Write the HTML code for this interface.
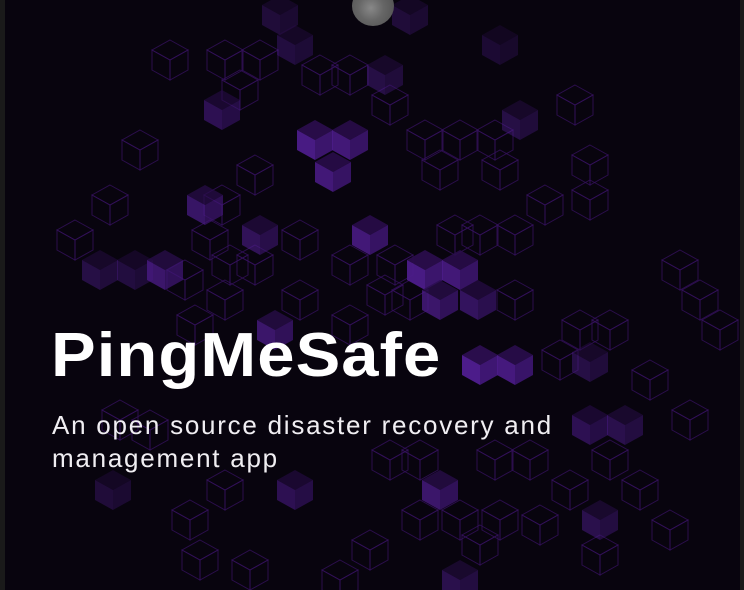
<!DOCTYPE html>
<html><head><meta charset="utf-8"><style>
html,body{margin:0;padding:0;background:#07040c;}
#w{position:relative;width:744px;height:590px;overflow:hidden;background:#08040e;}
#w:before{content:"";position:absolute;left:0;top:0;bottom:0;width:5px;background:#1a1a1a;z-index:3}
#w:after{content:"";position:absolute;right:0;top:0;bottom:0;width:4px;background:#1a1a1a;z-index:3}
svg{position:absolute;left:0;top:0}
.t{position:absolute;left:51px;top:321px;color:#fff;font-family:"Liberation Sans",sans-serif;font-weight:bold;font-size:62px;letter-spacing:1px;line-height:70px;z-index:2;transform:scaleX(1.08);transform-origin:0 0}
.s{position:absolute;left:52px;top:409px;color:#f0eef2;font-family:"Liberation Sans",sans-serif;font-size:26px;line-height:33px;letter-spacing:1.75px;z-index:2}
.dot{position:absolute;left:352px;top:-14px;width:42px;height:40px;border-radius:50%;background:radial-gradient(circle at 45% 55%,#888 0,#666 40%,#4a4a4a 100%);z-index:2}
</style></head><body><div id="w">
<svg id="g" width="744" height="590"></svg>
<div class="dot"></div>
<div class="t">PingMeSafe</div>
<div class="s">An open source disaster recovery and<br>management app</div>
</div>
<script>
var ns="http://www.w3.org/2000/svg",g=document.getElementById("g");
function cube(cx,cy,f,a){a=a||1;var s=20,h=18,p=function(l){var e=document.createElementNS(ns,"polygon");e.setAttribute("points",l);return e};
var T=[cx,cy-s],UR=[cx+h,cy-s/2],LR=[cx+h,cy+s/2],B=[cx,cy+s],LL=[cx-h,cy+s/2],UL=[cx-h,cy-s/2],C=[cx,cy];
function j(){return Array.prototype.map.call(arguments,function(q){return q.join(",")}).join(" ")}
var top=p(j(T,UR,C,UL)),l=p(j(UL,C,B,LL)),r=p(j(C,UR,LR,B));
[top,l,r].forEach(function(e,i){
 if(f){e.setAttribute("fill",["#2a0d4c","#4c1c8a","#3e1672"][i]);e.setAttribute("opacity",a);}
 else{e.setAttribute("fill","none");e.setAttribute("stroke","#34125c");e.setAttribute("stroke-width","1");e.setAttribute("opacity",a);}
 g.appendChild(e);});}
var F=[[280,15,.35],[410,15,.35],[295,45,.4],[385,75,.45],[222,110,.55],[315,140,.95],[350,140,.85],[333,172,.85],[205,205,.7],[260,235,.6],[370,235,.85],[100,270,.45],[135,270,.4],[165,270,.75],[425,270,.95],[460,270,.85],[440,300,.75],[478,300,.65],[275,330,.75],[480,365,1],[515,365,.9],[590,362,.45],[590,425,.55],[625,425,.5],[440,490,.75],[295,490,.55],[113,490,.35],[600,520,.5],[460,580,.5],[520,120,.45],[500,45,.3]];
var O=[[170,60],[225,60],[260,60],[240,90],[320,75],[350,75],[390,105],[425,140],[460,140],[495,140],[500,170],[440,170],[575,105],[590,165],[590,200],[545,205],[515,235],[480,235],[455,235],[255,175],[222,205],[210,240],[140,150],[110,205],[75,240],[185,280],[230,265],[350,265],[395,265],[300,240],[255,265],[225,300],[195,325],[300,300],[350,325],[385,295],[410,300],[515,300],[580,330],[610,330],[680,270],[700,300],[720,330],[560,360],[650,380],[690,420],[610,460],[640,490],[570,490],[390,460],[420,460],[495,460],[530,460],[420,520],[460,520],[500,520],[480,545],[540,525],[225,490],[190,520],[200,560],[370,550],[340,580],[250,570],[600,555],[670,530],[120,420],[150,430]];
O.forEach(function(c){cube(c[0],c[1],0,0.8)});
F.forEach(function(c){cube(c[0],c[1],1,c[2])});
</script>
</body></html>
